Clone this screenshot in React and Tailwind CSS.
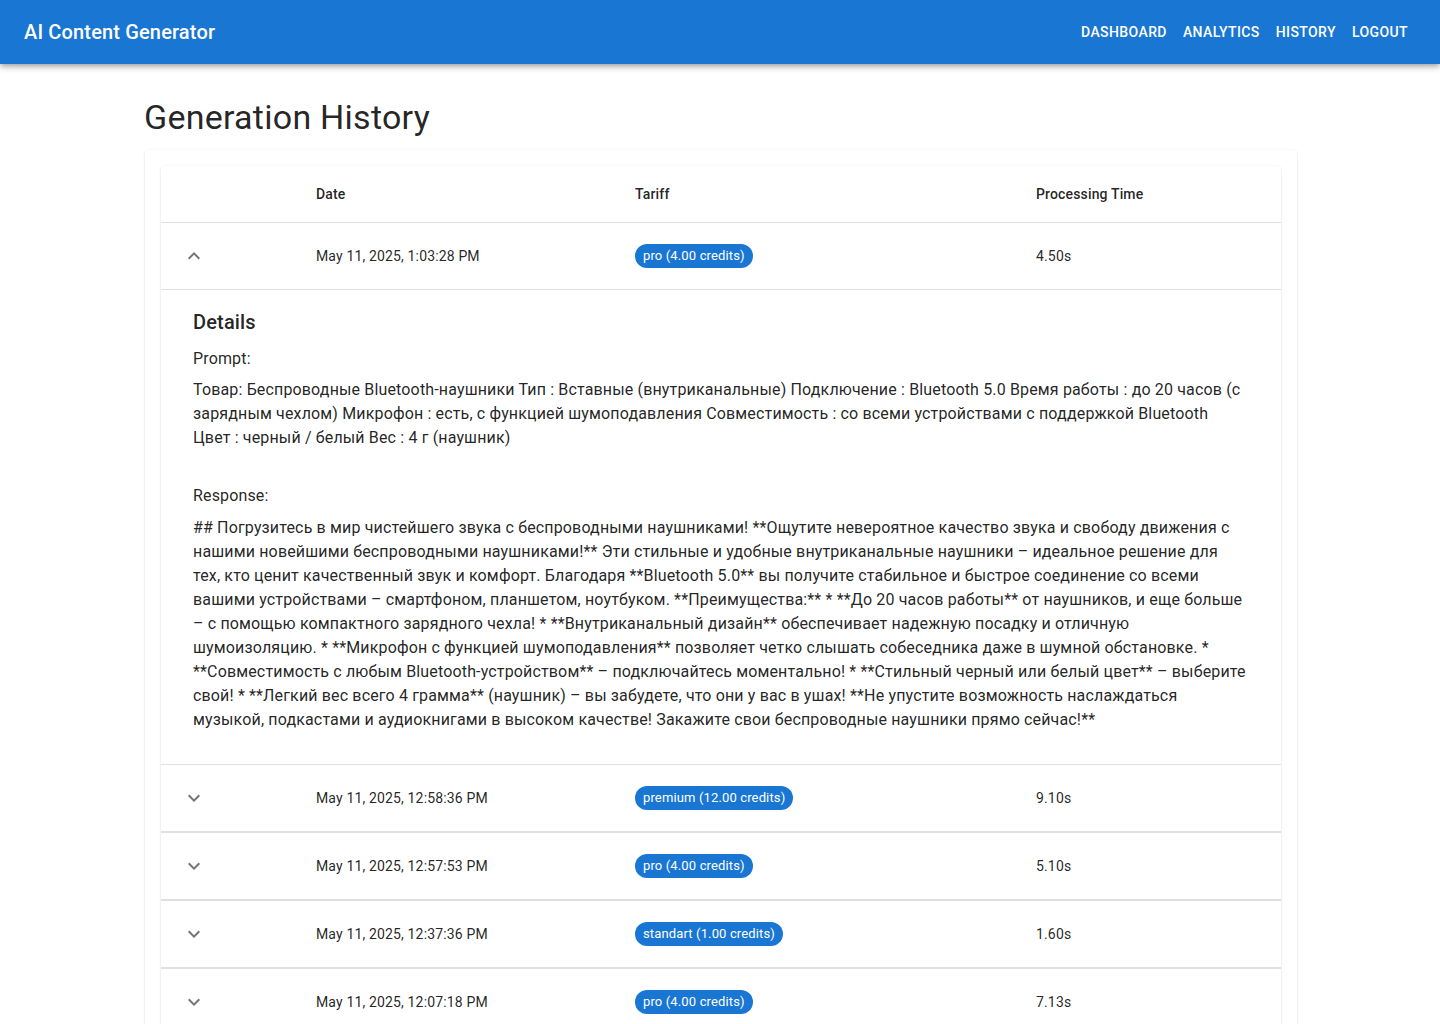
import React, { useState } from "react";

const rows = [
  { date: "May 11, 2025, 1:03:28 PM", tariff: "pro (4.00 credits)", time: "4.50s" },
  { date: "May 11, 2025, 12:58:36 PM", tariff: "premium (12.00 credits)", time: "9.10s" },
  { date: "May 11, 2025, 12:57:53 PM", tariff: "pro (4.00 credits)", time: "5.10s" },
  { date: "May 11, 2025, 12:37:36 PM", tariff: "standart (1.00 credits)", time: "1.60s" },
  { date: "May 11, 2025, 12:07:18 PM", tariff: "pro (4.00 credits)", time: "7.13s" },
  { date: "May 11, 2025, 11:52:04 AM", tariff: "pro (4.00 credits)", time: "4.82s" },
];

const prompt =
  "Товар: Беспроводные Bluetooth-наушники Тип : Вставные (внутриканальные) Подключение : Bluetooth 5.0 Время работы : до 20 часов (с зарядным чехлом) Микрофон : есть, с функцией шумоподавления Совместимость : со всеми устройствами с поддержкой Bluetooth Цвет : черный / белый Вес : 4 г (наушник)";

const response =
  "## Погрузитесь в мир чистейшего звука с беспроводными наушниками! **Ощутите невероятное качество звука и свободу движения с нашими новейшими беспроводными наушниками!** Эти стильные и удобные внутриканальные наушники – идеальное решение для тех, кто ценит качественный звук и комфорт. Благодаря **Bluetooth 5.0** вы получите стабильное и быстрое соединение со всеми вашими устройствами – смартфоном, планшетом, ноутбуком. **Преимущества:** * **До 20 часов работы** от наушников, и еще больше – с помощью компактного зарядного чехла! * **Внутриканальный дизайн** обеспечивает надежную посадку и отличную шумоизоляцию. * **Микрофон с функцией шумоподавления** позволяет четко слышать собеседника даже в шумной обстановке. * **Совместимость с любым Bluetooth-устройством** – подключайтесь моментально! * **Стильный черный или белый цвет** – выберите свой! * **Легкий вес всего 4 грамма** (наушник) – вы забудете, что они у вас в ушах! **Не упустите возможность наслаждаться музыкой, подкастами и аудиокнигами в высоком качестве! Закажите свои беспроводные наушники прямо сейчас!**";

const Chevron = ({ up }) => (
  <svg viewBox="0 0 24 24" className="w-6 h-6 fill-[rgba(0,0,0,0.54)]">
    <path
      d={
        up
          ? "M7.41 15.41 12 10.83l4.59 4.58L18 14l-6-6-6 6z"
          : "M7.41 8.59 12 13.17l4.59-4.58L18 10l-6 6-6-6z"
      }
    />
  </svg>
);

const HistoryRow = ({ row, defaultOpen }) => {
  const [open, setOpen] = useState(defaultOpen);
  return (
    <>
      <tr>
        <td className="p-4 border-b border-[#e0e0e0]">
          <button
            onClick={() => setOpen(!open)}
            className="p-[5px] rounded-full hover:bg-black/5 flex"
          >
            <Chevron up={open} />
          </button>
        </td>
        <td className="p-4 border-b border-[#e0e0e0] text-sm tracking-[0.01071em]">{row.date}</td>
        <td className="p-4 border-b border-[#e0e0e0] text-sm">
          <span className="inline-flex items-center h-6 px-2 rounded-2xl bg-[#1976d2] text-white text-[13px] tracking-[0.01071em]">
            {row.tariff}
          </span>
        </td>
        <td className="p-4 border-b border-[#e0e0e0] text-sm tracking-[0.01071em]">{row.time}</td>
      </tr>
      <tr>
        <td colSpan={4} className="px-4 py-0 border-b border-[#e0e0e0]">
          {open && (
            <div className="p-4">
              <h6 className="text-xl font-medium leading-8 tracking-[0.0075em] mb-[9px]">Details</h6>
              <div className="text-base leading-6 tracking-[0.00938em]">
                <p className="mb-[7px]">Prompt:</p>
                <p>{prompt}</p>
                <p className="mt-[34px] mb-2">Response:</p>
                <p className="mb-4">{response}</p>
              </div>
            </div>
          )}
        </td>
      </tr>
    </>
  );
};

const App = () => {
  return (
    <div className="min-h-screen bg-white text-[rgba(0,0,0,0.87)] font-['Roboto','Liberation_Sans',sans-serif]">
      <header className="h-16 bg-[#1976d2] text-white flex items-center px-6 shadow-[0px_2px_4px_-1px_rgba(0,0,0,0.2),0px_4px_5px_0px_rgba(0,0,0,0.14),0px_1px_10px_0px_rgba(0,0,0,0.12)]">
        <div className="flex-1 text-xl font-medium tracking-[0.0075em]">AI Content Generator</div>
        <nav className="flex">
          {["Dashboard", "Analytics", "History", "Logout"].map((item) => (
            <button
              key={item}
              className="px-2 py-1.5 text-sm font-medium uppercase tracking-[0.02857em] leading-[1.75] min-w-16"
            >
              {item}
            </button>
          ))}
        </nav>
      </header>

      <main className="max-w-[1200px] mx-auto pl-[25px] pr-[23px] pt-8">
        <h4 className="text-[34px] leading-[42px] tracking-[0.00735em] mb-3 -ml-px">Generation History</h4>
        <div className="p-4 rounded bg-white shadow-[0px_2px_1px_-1px_rgba(0,0,0,0.2),0px_1px_1px_0px_rgba(0,0,0,0.14),0px_1px_3px_0px_rgba(0,0,0,0.12)]">
          <div className="rounded bg-white shadow-[0px_2px_1px_-1px_rgba(0,0,0,0.2),0px_1px_1px_0px_rgba(0,0,0,0.14),0px_1px_3px_0px_rgba(0,0,0,0.12)]">
            <table className="w-full table-fixed border-collapse text-left">
              <colgroup>
                <col className="w-[139px]" />
                <col className="w-[319px]" />
                <col className="w-[401px]" />
                <col />
              </colgroup>
              <thead>
                <tr>
                  <th className="p-4 border-b border-[#e0e0e0]" />
                  <th className="p-4 border-b border-[#e0e0e0] text-sm font-medium leading-6 tracking-[0.01071em]">Date</th>
                  <th className="p-4 border-b border-[#e0e0e0] text-sm font-medium leading-6 tracking-[0.01071em]">Tariff</th>
                  <th className="p-4 border-b border-[#e0e0e0] text-sm font-medium leading-6 tracking-[0.01071em]">Processing Time</th>
                </tr>
              </thead>
              <tbody>
                {rows.map((row, i) => (
                  <HistoryRow key={row.date} row={row} defaultOpen={i === 0} />
                ))}
              </tbody>
            </table>
          </div>
        </div>
      </main>
    </div>
  );
};

export default App;
